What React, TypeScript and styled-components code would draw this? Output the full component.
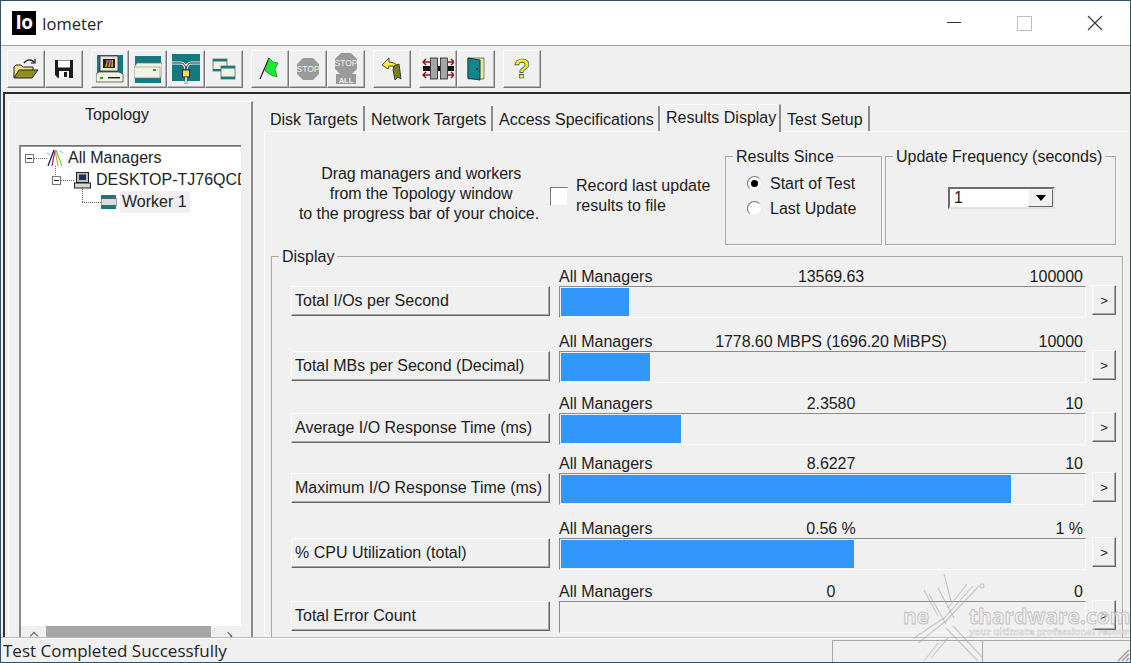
import React from "react";
import styled, { createGlobalStyle } from "styled-components";

const Global = createGlobalStyle`
  html, body { margin: 0; padding: 0; background: #f0f0f0; overflow: hidden; }
  * { box-sizing: border-box; }
`;

const Window = styled.div`
  position: relative; width: 1131px; height: 663px; overflow: hidden;
  display: flex; flex-direction: column;
  background: #f0f0f0; color: #1c1c1c;
  font-family: "Liberation Sans", Arial, sans-serif; font-size: 16px;
  border: 1px solid #2c5464;
`;
const TitleBar = styled.div`
  height: 45px; flex: none; background: #fff; display: flex; align-items: center;
  padding-left: 11px; border-bottom: 1px solid #a0a0a0;
`;
const Logo = styled.div`
  width: 24px; height: 24px; background: #000; color: #fff; display: flex; align-items: center; justify-content: center;
  font: bold 19px "Open Sans", sans-serif; letter-spacing: -0.5px; padding-bottom: 2px;
`;
const AppName = styled.div`
  margin-left: 6px; font: 16.5px "Open Sans", sans-serif; color: #222; flex: 1;
`;
const WinButton = styled.div<{ $w: number }>`
  width: ${p => p.$w}px; display: flex; justify-content: center;
`;
const Toolbar = styled.div`
  height: 46px; flex: none; display: flex; align-items: flex-start; padding: 4px 0 0 6px;
`;
const ToolGroup = styled.div`
  display: flex; margin-right: 8px;
`;
const ToolButton = styled.div`
  width: 38px; height: 38px; background: #f0f0f0; display: flex; align-items: center; justify-content: center;
  border: 1px solid; border-color: #fbfbfb #777 #777 #fbfbfb;
  box-shadow: inset -1px -1px 0 #b4b4b4;
`;
const Main = styled.div`
  height: 545px; flex: none; display: flex; margin-left: 2px; overflow: hidden;
  border-top: 2px solid #2a2a2a; border-left: 2px solid #333; padding: 7px 0 0 3px;
`;
const LeftPanel = styled.div`
  width: 245px; flex: none; display: flex; flex-direction: column; padding: 0 10px 0 10px;
  border-top: 1px solid #fafafa; border-left: 1px solid #fafafa; border-right: 2px solid #8a8a8a;
`;
const PanelTitle = styled.div`
  height: 43px; flex: none; padding: 4px 26px 0 0; text-align: center; color: #222;
`;
const TreeBox = styled.div`
  position: relative; flex: 1; background: #fff; display: flex; flex-direction: column; overflow: hidden;
  border-top: 1px solid #6f6f6f; border-left: 2px solid #8a8a8a; box-shadow: inset 0 1px 0 #9a9a9a; padding-top: 1px;
`;
const TreeRow = styled.div<{ $indent: number }>`
  height: 22px; flex: none; display: flex; align-items: center; padding-left: ${p => p.$indent}px; white-space: nowrap; color: #222;
  & > svg { flex: none; }
`;
const Expander = styled.span`
  width: 9px; height: 9px; border: 1px solid #777; background: #fff; position: relative; flex: none;
  &::after { content: ""; position: absolute; left: 1px; right: 1px; top: 3px; height: 1px; background: #222; }
`;
const Dots = styled.span<{ $w: number }>`
  width: ${p => p.$w}px; border-top: 1px dotted #666; flex: none;
`;
const VDots = styled.span<{ $x: number; $y: number; $h: number }>`
  position: absolute; left: ${p => p.$x}px; top: ${p => p.$y}px; height: ${p => p.$h}px; border-left: 1px dotted #666;
`;
const TreeLabel = styled.span<{ $sel?: boolean }>`
  margin-left: 3px; padding: 0 3px 0 2px; line-height: 22px; flex: none; background: ${p => (p.$sel ? "#f0f0f0" : "transparent")};
`;
const ScrollBar = styled.div`
  margin-top: auto; height: 11px; flex: none; background: #f0f0f0; display: flex; align-items: flex-start;
  justify-content: space-between; padding: 0 10px; position: relative;
`;
const Thumb = styled.div`
  position: absolute; left: 25px; width: 165px; top: 0; bottom: 0; background: #a6a6a6;
`;
const Chevron = styled.span<{ $dir: "l" | "r" }>`
  width: 6px; height: 6px; margin-top: 7px; border-top: 1.5px solid #555;
  border-${p => (p.$dir === "l" ? "left" : "right")}: 1.5px solid #555; transform: rotate(45deg);
`;
const RightPane = styled.div`
  flex: 1; min-width: 0; display: flex; flex-direction: column; padding-left: 11px;
`;
const TabStrip = styled.div`
  height: 30px; flex: none; display: flex; align-items: flex-end;
`;
const Tab = styled.div<{ $w: number; $active?: boolean }>`
  width: ${p => p.$w}px; height: ${p => (p.$active ? 28 : 25)}px; padding: ${p => (p.$active ? "4px 0 0 5px" : "5px 0 0 6px")};
  white-space: nowrap; flex: none; border-right: 2px solid #8c8c8c;
  ${p => p.$active ? "border-top: 1px solid #fafafa; border-left: 1px solid #fafafa; margin-bottom: -1px; position: relative; background: #f0f0f0;" : ""}
`;
const TabPanel = styled.div`
  flex: 1; display: flex; flex-direction: column; border-top: 1px solid #fafafa; border-left: 1px solid #fafafa;
  padding: 25px 0 0 6px; width: 864px; min-height: 0;
`;
const TopArea = styled.div`
  height: 99px; flex: none; display: flex; align-items: flex-start;
`;
const HelpText = styled.div`
  width: 279px; padding: 7px 0 0 17px; line-height: 20px; text-align: center; flex: none; letter-spacing: -0.08px; white-space: nowrap;
`;
const CheckArea = styled.div`
  width: 175px; padding: 19px 0 0 0; display: flex; align-items: flex-start; gap: 8px; flex: none; line-height: 20px;
`;
const CheckBox = styled.div`
  width: 18px; height: 19px; margin-top: 11px; background: #fff; flex: none;
  border: 1px solid; border-color: #777 #eee #eee #777;
`;
const GroupBox = styled.div<{ $w: number }>`
  position: relative; width: ${p => p.$w}px; height: 89px; flex: none; margin: -1px 3px 0 0;
  border: 1px solid #a8a8a8; box-shadow: 1px 1px 0 #fafafa;
`;
const GroupTitle = styled.span`
  position: absolute; left: 7px; top: -9px; padding: 0 3px; background: #f0f0f0; white-space: nowrap;
`;
const RadioRow = styled.div`
  height: 25px; display: flex; align-items: center; padding-left: 21px; gap: 8px;
`;
const RadioList = styled.div`
  padding-top: 14px;
`;
const Radio = styled.span<{ $on?: boolean }>`
  width: 15px; height: 15px; border-radius: 50%; background: #fff; flex: none; position: relative;
  border: 1px solid; border-color: #777 #e8e8e8 #e8e8e8 #777;
  ${p => p.$on ? `&::after { content: ""; position: absolute; left: 3px; top: 3px; width: 7px; height: 7px; border-radius: 50%; background: #000; }` : ""}
`;
const Combo = styled.div`
  margin: 30px 0 0 62px; width: 107px; height: 22px; background: #fff; display: flex; align-items: center; padding-left: 4px;
  border: 2px solid; border-color: #6c6c6c #e4e4e4 #e4e4e4 #6c6c6c;
`;
const ComboButton = styled.div`
  margin-left: auto; width: 25px; height: 18px; background: #f0f0f0; display: flex; align-items: center; justify-content: center;
  border: 1px solid; border-color: #fafafa #666 #666 #fafafa;
  &::after { content: ""; border: 5px solid transparent; border-top: 6px solid #000; border-bottom: 0; }
`;
const Display = styled.div`
  position: relative; flex: 1; width: 852px; min-height: 0; border: 1px solid #a8a8a8; border-bottom: 0;
  padding: 11px 0 0 19px; box-shadow: 1px 1px 0 #fafafa; display: flex; flex-direction: column;
`;
const MetricRow = styled.div<{ $mt: number }>`
  flex: none; height: 50px; margin-top: ${p => p.$mt}px; display: grid;
  grid-template-columns: 260px 527px 24px;
`;
const MetricButton = styled.div`
  margin-top: 18px; width: 259px; height: 30px; padding: 0 0 1px 3px; display: flex; align-items: center; white-space: nowrap;
  border: 1px solid; border-color: #fafafa #666 #666 #fafafa; box-shadow: inset -1px -1px 0 #a8a8a8;
`;
const BarColumn = styled.div`
  margin-left: 8px; width: 527px; display: flex; flex-direction: column;
`;
const BarLabels = styled.div`
  height: 18px; display: grid; grid-template-columns: 189px 166px 1fr; padding-right: 3px; line-height: 17px; white-space: nowrap;
`;
const Who = styled.span``;
const Value = styled.span`
  display: flex; justify-content: center; letter-spacing: -0.08px;
`;
const Max = styled.span`
  text-align: right;
`;
const Track = styled.div`
  height: 32px; border: 1px solid; border-color: #8a8a8a #fafafa #fafafa #8a8a8a; padding: 1px;
`;
const Fill = styled.div`
  height: 100%; background: #3296fb;
`;
const MoreButton = styled.div`
  margin: 17px 0 0 14px; width: 24px; height: 30px; display: flex; align-items: center; justify-content: center; font-size: 13px;
  border: 1px solid; border-color: #fafafa #666 #666 #fafafa; box-shadow: inset -1px -1px 0 #a8a8a8;
`;
const StatusBar = styled.div`
  flex: 1; display: flex; border-top: 1px solid #bdbdbd; box-shadow: inset 0 1px 0 #fafafa; position: relative;
  font: 17px "Open Sans", sans-serif; color: #222;
`;
const StatusText = styled.div`
  width: 831px; padding: 1px 0 0 2px; white-space: nowrap;
`;
const StatusPane = styled.div<{ $w: number }>`
  width: ${p => p.$w}px; margin-top: 2px; border-left: 1px solid #a8a8a8; border-top: 1px solid #a8a8a8;
`;
const Grip = styled.svg`
  position: absolute; right: 0; bottom: 0;
`;
const Watermark = styled.div`
  position: absolute; left: 885px; top: 565px; width: 246px; height: 98px; pointer-events: none;
`;
const MarkWord = styled.span<{ $x: number }>`
  position: absolute; left: ${p => p.$x}px; top: 37px; font: bold 21px "Open Sans", sans-serif;
  color: rgba(240,240,240,.7); -webkit-text-stroke: 1px rgba(175,175,175,.7); line-height: 26px; white-space: nowrap;
`;
const MarkTag = styled.span`
  position: absolute; left: 83px; top: 60px; font: bold 9.5px "Open Sans", sans-serif; white-space: nowrap;
  color: rgba(240,240,240,.7); -webkit-text-stroke: .4px rgba(175,175,175,.8); line-height: 12px;
`;
const MarkSvg = styled.svg`
  position: absolute; left: 0; top: 0;
`;

const Open = () => (
  <svg width="26" height="24" viewBox="0 0 26 24">
    <path d="M11 6c3-4 7-4 10-1" fill="none" stroke="#111" strokeWidth="1.4" />
    <path d="M22 2v4h-4" fill="none" stroke="#111" strokeWidth="1.2" />
    <path d="M1 21V10l2-2h5l2 2h10v3" fill="#f1dc75" stroke="#222" />
    <path d="M1 21l5-8h19l-6 8z" fill="#8e8e1e" stroke="#222" />
  </svg>
);
const Save = () => (
  <svg width="20" height="20" viewBox="0 0 20 20">
    <path d="M1 1h18v18H4l-3-3z" fill="#1b1b1b" />
    <rect x="4" y="1.5" width="12" height="7" fill="#fff" />
    <rect x="5" y="12" width="10" height="7" fill="#fff" />
    <rect x="10" y="13" width="3" height="5" fill="#1b1b1b" />
  </svg>
);
const Computer = () => (
  <svg width="28" height="28" viewBox="0 0 28 28">
    <rect x="1" y="0" width="26" height="21" fill="#157a80" />
    <path d="M4 1h18v15H4z" fill="#e9e9dc" stroke="#222" strokeWidth=".7" />
    <rect x="7" y="4" width="12" height="9" fill="#222" />
    <path d="M9 12l2-7h1l-1 7zM12 12l2-7h1l-1 7zM15 12l1-7h1l0 7z" fill="#c9a23a" />
    <path d="M10 5h6v3h-6z" fill="#a553a5" opacity=".7" />
    <path d="M3 17h20l4 2v8H0v-8z" fill="#f1f1e4" stroke="#333" strokeWidth=".7" />
    <rect x="4" y="22" width="3" height="2" fill="#27a33b" />
    <rect x="12" y="22" width="12" height="1.4" fill="#222" />
  </svg>
);
const Drive = () => (
  <svg width="28" height="27" viewBox="0 0 28 27">
    <rect x="1" y="0" width="26" height="27" fill="#157a80" />
    <path d="M0 11l3-4h25v12l-2 3H0z" fill="#f1f1e4" stroke="#777" strokeWidth=".7" />
    <path d="M0 11h26v11" fill="none" stroke="#999" strokeWidth=".7" />
    <rect x="19" y="13" width="3" height="2" fill="#27a33b" />
  </svg>
);
const Net = () => (
  <svg width="30" height="30" viewBox="0 0 30 30">
    <rect x="1" y="0" width="28" height="27" fill="#157a80" />
    <path d="M1 9h8c4 0 5 2 6 6 1-4 2-6 6-6h8" fill="none" stroke="#fff" strokeWidth="3" />
    <path d="M1 9h8c4 0 5 2 6 6 1-4 2-6 6-6h8" fill="none" stroke="#111" strokeWidth="1" />
    <rect x="11.5" y="16" width="7" height="7" fill="#eedf62" stroke="#222" />
    <rect x="14" y="23" width="2" height="7" fill="#fff" stroke="#444" strokeWidth=".5" />
  </svg>
);
const Workers = () => (
  <svg width="24" height="22" viewBox="0 0 24 22">
    <rect x="1" y="1" width="14" height="12" fill="#f1f1e4" stroke="#555" strokeWidth=".7" />
    <rect x="1" y="1" width="14" height="2.5" fill="#157a80" />
    <rect x="1" y="11" width="8" height="2" fill="#157a80" />
    <rect x="9" y="8" width="14" height="13" fill="#f1f1e4" stroke="#555" strokeWidth=".7" />
    <rect x="9" y="8" width="14" height="2.5" fill="#157a80" />
    <rect x="9" y="18.5" width="14" height="2.5" fill="#157a80" />
  </svg>
);
const Flag = () => (
  <svg width="24" height="26" viewBox="0 0 24 26">
    <path d="M2 23L11 2" stroke="#111" strokeWidth="1.1" />
    <path d="M11 2l4 4 5 1-3 6 2 8-6-2-6-4z" fill="#18ec30" stroke="#0c6a18" strokeWidth=".6" />
  </svg>
);
const Stop = () => (
  <svg width="24" height="24" viewBox="0 0 24 24">
    <path d="M7 1h10l6 6v10l-6 6H7l-6-6V7z" fill="#9a9a9a" />
    <text x="12" y="15" textAnchor="middle" fontFamily="Liberation Sans" fontSize="8.5" fill="#efefef">STOP</text>
  </svg>
);
const StopAll = () => (
  <svg width="24" height="32" viewBox="0 0 24 32">
    <path d="M7 0h10l6 6v10l-6 6H7l-6-6V6z" fill="#9a9a9a" />
    <text x="12" y="13" textAnchor="middle" fontFamily="Liberation Sans" fontSize="8.5" fill="#efefef">STOP</text>
    <rect x="2" y="21" width="20" height="10" fill="#9a9a9a" />
    <text x="12" y="29.5" textAnchor="middle" fontFamily="Liberation Sans" fontSize="7.5" fontWeight="bold" fill="#efefef">ALL</text>
  </svg>
);
const Back = () => (
  <svg width="22" height="24" viewBox="0 0 22 24">
    <path d="M8 1L1 8l6 4 1-3h4l2 2 3-2-4-3-5-1z" fill="#f6f03a" stroke="#222" strokeWidth=".8" />
    <path d="M13 9l5-2 2 15-3-2-3 3-2-10z" fill="#7c7c20" stroke="#222" strokeWidth=".8" />
  </svg>
);
const Disconnect = () => (
  <svg width="32" height="24" viewBox="0 0 32 24">
    <rect x="8.5" y="1" width="7" height="21" fill="#a5a5a5" stroke="#222" strokeWidth=".8" />
    <rect x="18.5" y="1" width="7" height="21" fill="#a5a5a5" stroke="#222" strokeWidth=".8" />
    <rect x="1" y="9" width="7" height="5" fill="#111" />
    <rect x="16" y="9" width="2" height="5" fill="#111" />
    <rect x="26" y="9" width="6" height="5" fill="#111" />
    <path d="M8 5H1M4 2L1 5l3 3M26 5h6M29 2l3 3-3 3M8 18H1M4 15l-3 3 3 3M26 18h6M29 15l3 3-3 3" fill="none" stroke="#8a1c1c" strokeWidth="1.5" />
  </svg>
);
const Door = () => (
  <svg width="18" height="24" viewBox="0 0 18 24">
    <path d="M1 1h16v21H1z" fill="#e8e89a" stroke="#333" strokeWidth=".6" />
    <path d="M1 1l12 2v20L1 21z" fill="#12878b" stroke="#0b3a3d" />
    <circle cx="10" cy="12" r=".9" fill="#111" />
  </svg>
);
const Help = () => (
  <svg width="18" height="26" viewBox="0 0 18 26">
    <text x="9" y="22" textAnchor="middle" fontFamily="Liberation Sans" fontWeight="bold" fontSize="27" fill="#f8f230" stroke="#333" strokeWidth=".7">?</text>
  </svg>
);
const Minimize = () => <svg width="14" height="2"><rect width="14" height="1" fill="#333" /></svg>;
const Maximize = () => <svg width="15" height="15"><rect x=".5" y=".5" width="14" height="14" fill="none" stroke="#bdbdbd" /></svg>;
const Close = () => <svg width="16" height="16"><path d="M1 1l14 14M15 1L1 15" stroke="#333" strokeWidth="1.1" /></svg>;

const ManagersIcon = () => (
  <svg width="16" height="18" viewBox="0 0 16 18">
    <path d="M1 17L7 1" stroke="#1b1b6a" strokeWidth="1.3" />
    <path d="M5 17L8 1" stroke="#a0208a" strokeWidth="1.3" />
    <path d="M8 1l3 16" stroke="#e0a020" strokeWidth="1.3" />
    <path d="M9 1l6 16" stroke="#40c040" strokeWidth="1" />
    <path d="M0 4l3 2M13 2l3 2" stroke="#58c0e0" strokeWidth="1" />
  </svg>
);
const PcIcon = () => (
  <svg width="17" height="17" viewBox="0 0 17 17">
    <rect x="2.5" y="0.5" width="12" height="10" fill="#bcbcbc" stroke="#222" />
    <rect x="5" y="2.5" width="7" height="5.5" fill="#23305c" />
    <rect x="0.5" y="11" width="16" height="5" fill="#d6d6d6" stroke="#222" />
  </svg>
);
const WorkerIcon = () => (
  <svg width="16" height="14" viewBox="0 0 16 14">
    <rect x="0" y="0" width="15" height="14" fill="#157a80" />
    <rect x="0" y="3.5" width="16" height="7" rx="1" fill="#dcdcdc" stroke="#444" strokeWidth=".7" />
  </svg>
);

const metrics = [
  { name: "Total I/Os per Second", value: "13569.63", max: "100000", pct: 68, mt: 0 },
  { name: "Total MBs per Second (Decimal)", value: "1778.60 MBPS (1696.20 MiBPS)", max: "10000", pct: 89, mt: 15 },
  { name: "Average I/O Response Time (ms)", value: "2.3580", max: "10", pct: 120, mt: 12 },
  { name: "Maximum I/O Response Time (ms)", value: "8.6227", max: "10", pct: 450, mt: 10 },
  { name: "% CPU Utilization (total)", value: "0.56 %", max: "1 %", pct: 293, mt: 15 },
  { name: "Total Error Count", value: "0", max: "0", pct: 0, mt: 13 },
];

const tabs = [
  { label: "Disk Targets", w: 101 },
  { label: "Network Targets", w: 128 },
  { label: "Access Specifications", w: 167 },
  { label: "Results Display", w: 121, active: true },
  { label: "Test Setup", w: 89 },
];

const toolGroups = [
  [<Open key="a" />, <Save key="b" />],
  [<Computer key="a" />, <Drive key="b" />, <Net key="c" />, <Workers key="d" />],
  [<Flag key="a" />, <Stop key="b" />, <StopAll key="c" />],
  [<Back key="a" />],
  [<Disconnect key="a" />, <Door key="b" />],
  [<Help key="a" />],
];

export default function App() {
  return (
    <Window>
      <Global />
      <TitleBar>
        <Logo>Io</Logo>
        <AppName>Iometer</AppName>
        <WinButton $w={71}><Minimize /></WinButton>
        <WinButton $w={71}><Maximize /></WinButton>
        <WinButton $w={70}><Close /></WinButton>
      </TitleBar>
      <Toolbar>
        {toolGroups.map((g, i) => (
          <ToolGroup key={i}>
            {g.map((icon, j) => <ToolButton key={j}>{icon}</ToolButton>)}
          </ToolGroup>
        ))}
      </Toolbar>
      <Main>
        <LeftPanel>
          <PanelTitle>Topology</PanelTitle>
          <TreeBox>
            <VDots $x={34} $y={20} $h={9} />
            <VDots $x={61} $y={41} $h={15} />
            <TreeRow $indent={4}><Expander /><Dots $w={13} /><ManagersIcon /><TreeLabel>All Managers</TreeLabel></TreeRow>
            <TreeRow $indent={31}><Expander /><Dots $w={13} /><PcIcon /><TreeLabel>DESKTOP-TJ76QCD</TreeLabel></TreeRow>
            <TreeRow $indent={61}><Dots $w={19} /><WorkerIcon /><TreeLabel $sel>Worker 1</TreeLabel></TreeRow>
            <ScrollBar>
              <Chevron $dir="l" />
              <Thumb />
              <Chevron $dir="r" />
            </ScrollBar>
          </TreeBox>
        </LeftPanel>
        <RightPane>
          <TabStrip>
            {tabs.map(t => <Tab key={t.label} $w={t.w} $active={t.active}>{t.label}</Tab>)}
          </TabStrip>
          <TabPanel>
            <TopArea>
              <HelpText>
                {"\u00a0"}Drag managers and workers<br />{"\u00a0"}from the Topology window<br />to the progress bar of your choice.
              </HelpText>
              <CheckArea>
                <CheckBox />
                <span>Record last update<br />results to file</span>
              </CheckArea>
              <GroupBox $w={157}>
                <GroupTitle>Results Since</GroupTitle>
                <RadioList>
                  <RadioRow><Radio $on />Start of Test</RadioRow>
                  <RadioRow><Radio />Last Update</RadioRow>
                </RadioList>
              </GroupBox>
              <GroupBox $w={231}>
                <GroupTitle>Update Frequency (seconds)</GroupTitle>
                <Combo>1<ComboButton /></Combo>
              </GroupBox>
            </TopArea>
            <Display>
              <GroupTitle>Display</GroupTitle>
              {metrics.map(m => (
                <MetricRow key={m.name} $mt={m.mt}>
                  <MetricButton>{m.name}</MetricButton>
                  <BarColumn>
                    <BarLabels>
                      <Who>All Managers</Who>
                      <Value>{m.value}</Value>
                      <Max>{m.max}</Max>
                    </BarLabels>
                    <Track><Fill style={{ width: m.pct }} /></Track>
                  </BarColumn>
                  <MoreButton>&gt;</MoreButton>
                </MetricRow>
              ))}
            </Display>
          </TabPanel>
        </RightPane>
      </Main>
      <StatusBar>
        <StatusText>Test Completed Successfully</StatusText>
        <StatusPane $w={150} />
        <StatusPane $w={148} />
        <Grip width="14" height="14" viewBox="0 0 14 14">
          <path d="M13 2L2 13M13 6L6 13M13 10L10 13" stroke="#9a9a9a" strokeWidth="1.4" />
        </Grip>
      </StatusBar>
      <Watermark>
        <MarkSvg width="246" height="98" viewBox="0 0 246 98" fill="none" stroke="rgba(170,170,170,.6)" strokeWidth="1.1">
          <path d="M58 8l7 27M43 28l17 30M52 22l16 30M38 24l14 26" />
          <path d="M93 20L60 55 32 77M87 20L58 52 28 72M81 18L62 42" />
          <path d="M60 62l32 33M67 60l30 32" />
          <path d="M45 92l17-20M38 95l14-18" />
          <circle cx="96" cy="20" r="2" />
        </MarkSvg>
        <MarkWord $x={17}>ne</MarkWord>
        <MarkWord $x={83}>thardware.com</MarkWord>
        <MarkTag>your ultimate professional resource</MarkTag>
      </Watermark>
    </Window>
  );
}
